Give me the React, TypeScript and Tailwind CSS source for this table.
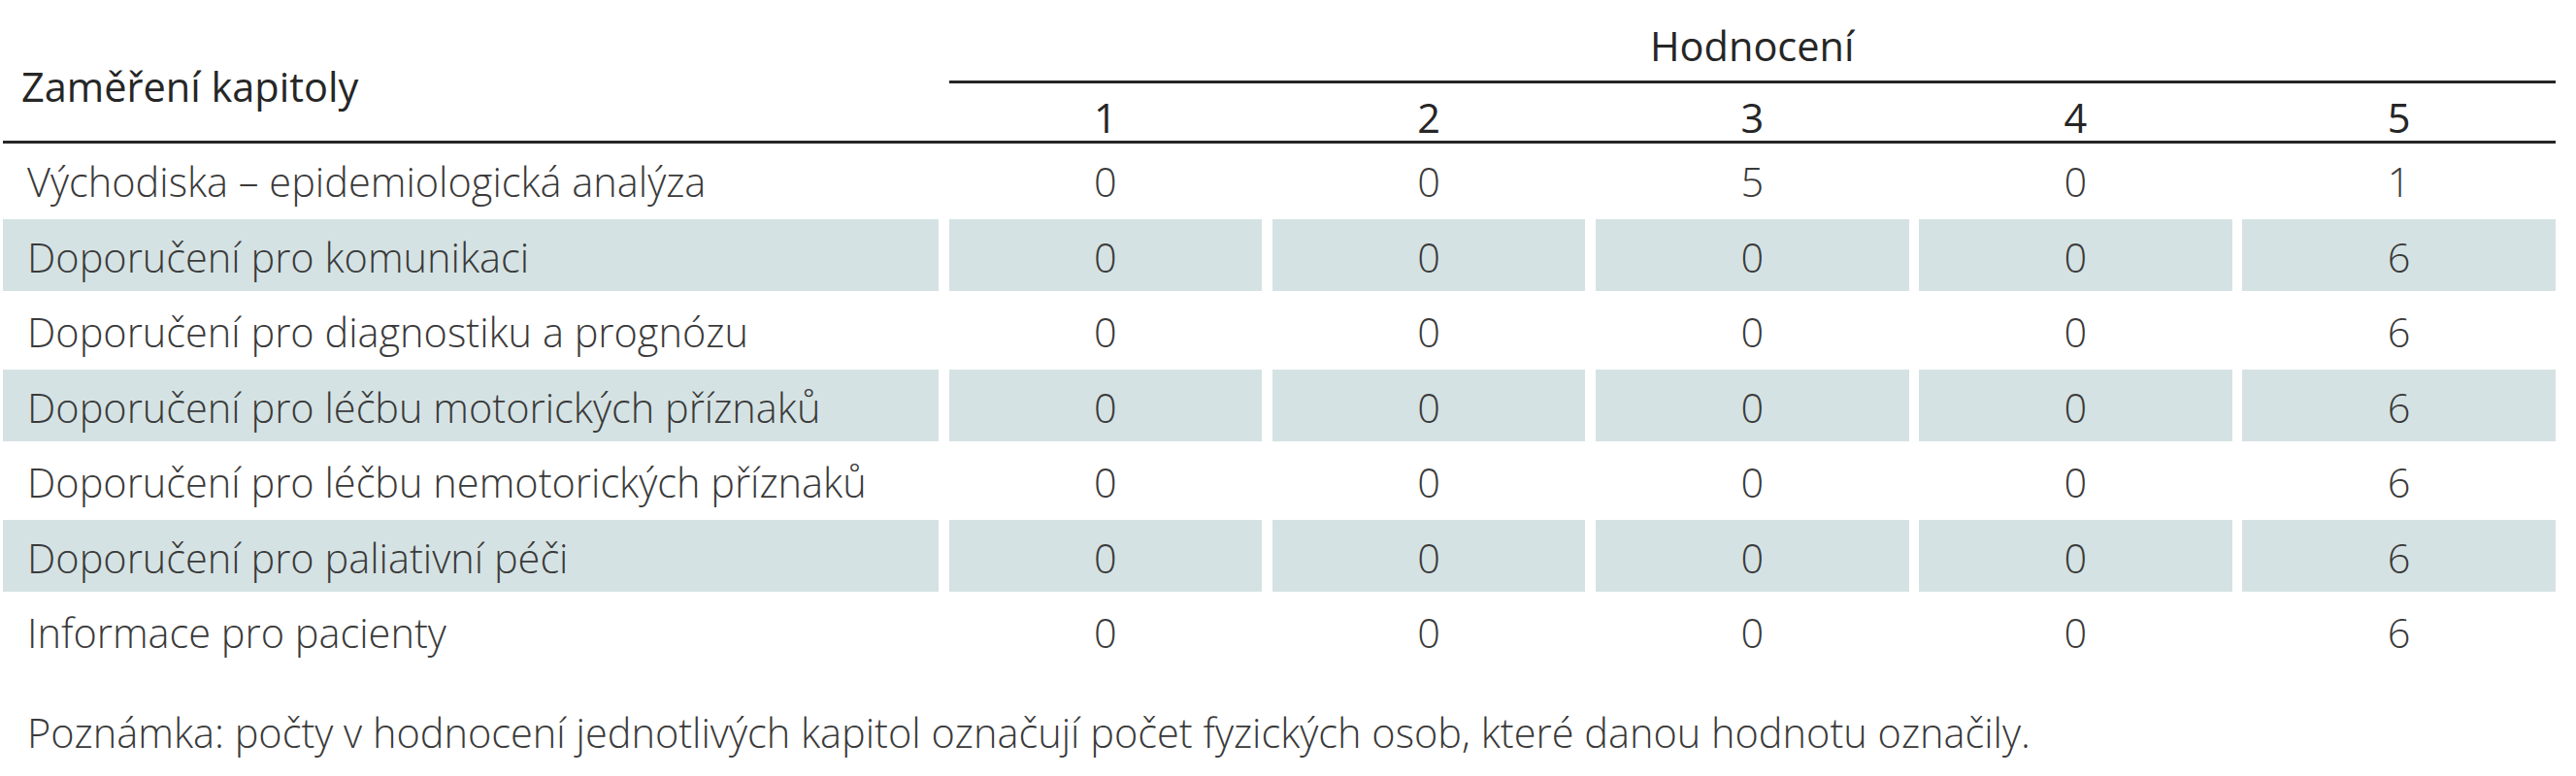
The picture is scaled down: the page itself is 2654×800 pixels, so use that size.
const rows: { label: string; values: number[] }[] = [
  { label: 'Východiska – epidemiologická analýza', values: [0, 0, 5, 0, 1] },
  { label: 'Doporučení pro komunikaci', values: [0, 0, 0, 0, 6] },
  { label: 'Doporučení pro diagnostiku a prognózu', values: [0, 0, 0, 0, 6] },
  { label: 'Doporučení pro léčbu motorických příznaků', values: [0, 0, 0, 0, 6] },
  { label: 'Doporučení pro léčbu nemotorických příznaků', values: [0, 0, 0, 0, 6] },
  { label: 'Doporučení pro paliativní péči', values: [0, 0, 0, 0, 6] },
  { label: 'Informace pro pacienty', values: [0, 0, 0, 0, 6] },
];

const grid = 'grid grid-cols-[964px_repeat(5,1fr)] gap-x-[10.5px]';

export default function App() {
  return (
    <div className="min-h-screen bg-white font-['Open_Sans',sans-serif] text-[41.5px] text-[#3a3a3a]">
      <div className="ml-[3px] w-[2630px]">
        {/* header */}
        <div className={`${grid} border-b-[3px] border-[#262626]`}>
          <div className="flex items-center pl-[19px] pt-[34px] font-normal text-[#262626]">
            Zaměření kapitoly
          </div>
          <div className="col-span-5 flex flex-col">
            <div className="flex h-[86px] items-center justify-center border-b-[3px] border-[#262626] pt-[12px] text-[#262626]">
              Hodnocení
            </div>
            <div className="grid h-[59px] grid-cols-5 gap-x-[10.5px] pt-[4px] text-[#262626]">
              {[1, 2, 3, 4, 5].map((n) => (
                <div key={n} className="flex items-center justify-center">
                  {n}
                </div>
              ))}
            </div>
          </div>
        </div>

        {/* body */}
        <div className={`${grid} gap-y-[3px] font-light`}>
          {rows.map((row, i) => {
            const bg = i % 2 === 1 ? 'bg-[#d5e2e3]' : '';
            return (
              <div key={row.label} className="contents">
                <div className={`flex h-[74.5px] items-center pl-[25px] pt-[4px] ${bg}`}>{row.label}</div>
                {row.values.map((v, j) => (
                  <div key={j} className={`flex h-[74.5px] items-center justify-center pt-[4px] ${bg}`}>
                    {v}
                  </div>
                ))}
              </div>
            );
          })}
        </div>

        <p className="mt-[36px] pl-[25px] font-light">
          Poznámka: počty v hodnocení jednotlivých kapitol označují počet fyzických osob, které danou hodnotu označily.
        </p>
      </div>
    </div>
  );
}
